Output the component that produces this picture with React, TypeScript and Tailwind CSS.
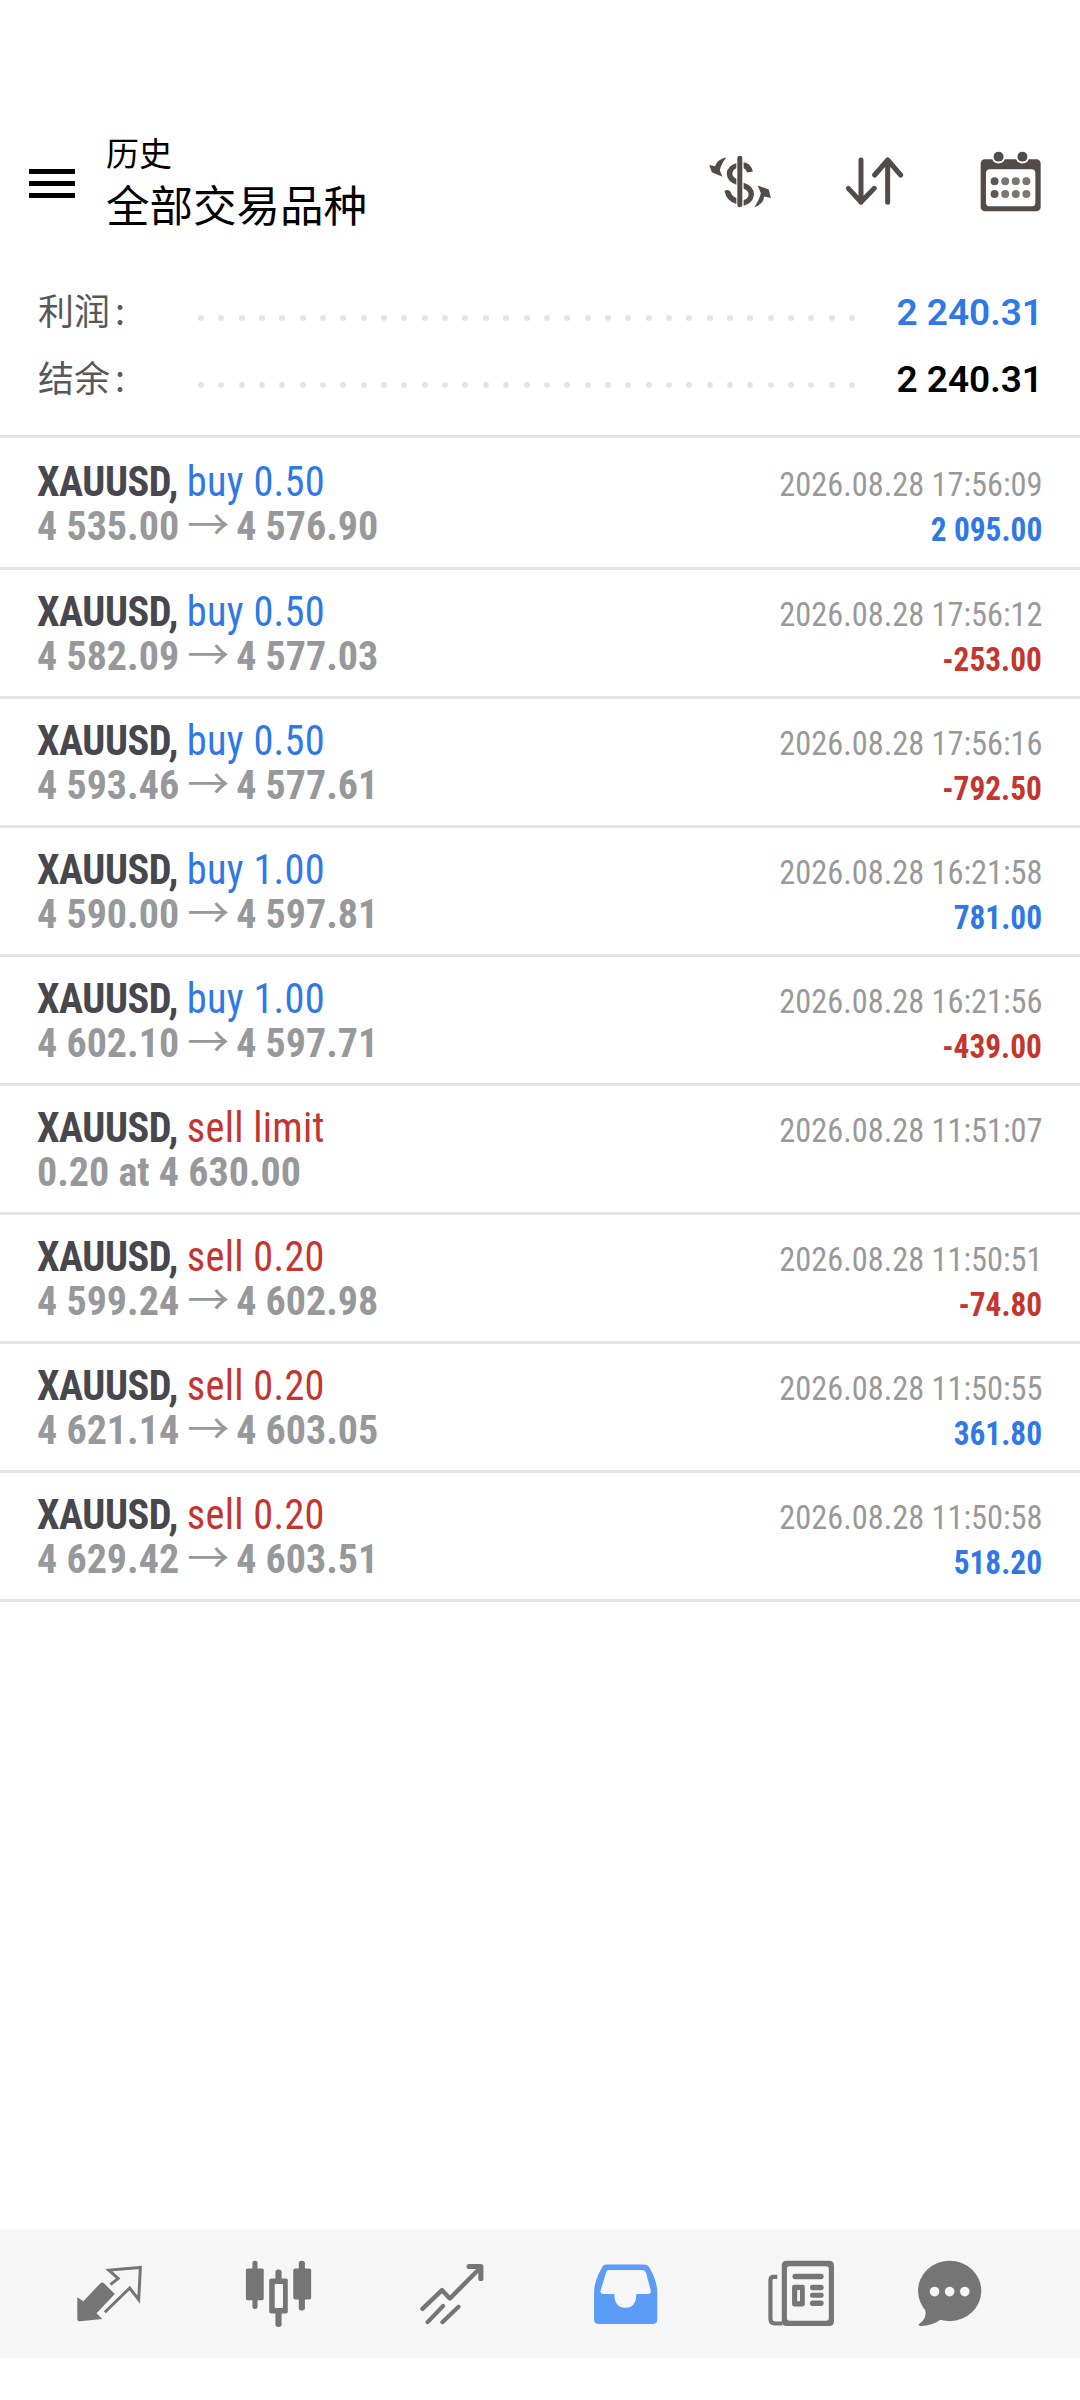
const sans = "font-['Roboto',sans-serif]";

interface Deal {
  side: string;
  sell?: boolean;
  prices: string;
  time: string;
  profit?: string;
}

const deals: Deal[] = [
  { side: 'buy 0.50', prices: '4 535.00 → 4 576.90', time: '2026.08.28 17:56:09', profit: '2 095.00' },
  { side: 'buy 0.50', prices: '4 582.09 → 4 577.03', time: '2026.08.28 17:56:12', profit: '-253.00' },
  { side: 'buy 0.50', prices: '4 593.46 → 4 577.61', time: '2026.08.28 17:56:16', profit: '-792.50' },
  { side: 'buy 1.00', prices: '4 590.00 → 4 597.81', time: '2026.08.28 16:21:58', profit: '781.00' },
  { side: 'buy 1.00', prices: '4 602.10 → 4 597.71', time: '2026.08.28 16:21:56', profit: '-439.00' },
  { side: 'sell limit', sell: true, prices: '0.20 at 4 630.00', time: '2026.08.28 11:51:07' },
  { side: 'sell 0.20', sell: true, prices: '4 599.24 → 4 602.98', time: '2026.08.28 11:50:51', profit: '-74.80' },
  { side: 'sell 0.20', sell: true, prices: '4 621.14 → 4 603.05', time: '2026.08.28 11:50:55', profit: '361.80' },
  { side: 'sell 0.20', sell: true, prices: '4 629.42 → 4 603.51', time: '2026.08.28 11:50:58', profit: '518.20' },
];

function MoneyIcon() {
  return (
    <svg viewBox="20 20 195 160" className="h-[53px] w-[65px]" fill="#524b48">
      <rect x="111" y="22" width="15" height="156" rx="7" />
      <path d="M108 44Q78 54 79 78Q81 100 108 110V92Q96 86 96 76Q96 66 108 60Z" />
      <path d="M130 42Q152 45 158 70L141 73Q137 62 130 60Z" />
      <path d="M130 104Q162 114 161 140Q158 166 130 173V156Q144 152 145 140Q145 128 130 122Z" />
      <path d="M72 128Q84 122 90 130Q95 145 108 150V168Q78 160 72 128Z" />
      <path d="M78 27Q48 35 44 54L26 50L34 72L66 86L58 66Q62 48 78 27Z" />
      <path d="M162 178Q190 168 192 145L212 150L206 124L172 112L182 135Q178 155 162 178Z" />
    </svg>
  );
}

function SortIcon() {
  return (
    <svg viewBox="555 115 180 150" className="h-[50px] w-[60px]" fill="none" stroke="#524b48" strokeWidth="15" strokeLinecap="round" strokeLinejoin="round">
      <path d="M606 127V254M568 212L606 253L646 212" />
      <path d="M686 254V127M647 172L686 127L725 172" />
    </svg>
  );
}

function CalendarIcon() {
  return (
    <svg viewBox="955 92 190 190" className="h-[63px] w-[63px]">
      <rect x="960" y="120" width="181" height="157" rx="13" fill="#524b48" />
      <rect x="976" y="150" width="149" height="112" rx="12" fill="#fff" />
      <circle cx="1014" cy="112" r="21" fill="#fff" />
      <circle cx="1086" cy="112" r="21" fill="#fff" />
      <circle cx="1014" cy="112" r="15" fill="#524b48" />
      <circle cx="1086" cy="112" r="15" fill="#524b48" />
      {[1002, 1034, 1066, 1098].map((x) => (
        <g key={x} fill={x === 1002 ? '#5f5855' : '#7d7673'}>
          <circle cx={x} cy="186" r="12" />
          <circle cx={x} cy="225" r="12" />
        </g>
      ))}
    </svg>
  );
}

function TradeIcon() {
  return (
    <svg viewBox="40 40 205 180" className="h-[60px] w-[68px]">
      <path d="M47 140L65 152L116 98Q122 92 128 98L160 130L105 188L122 205L55 212Q47 212 47 205Z" fill="#757575" />
      <path d="M147 102L170 83L142 58L237 50L232 147L205 112L130 185" fill="none" stroke="#757575" strokeWidth="9" />
    </svg>
  );
}

function CandlesIcon() {
  return (
    <svg viewBox="710 150 206 198" className="h-[68px] w-[71px]" fill="#757575">
      <rect x="737" y="152" width="15" height="141" rx="7" />
      <rect x="718" y="175" width="52" height="92" rx="5" />
      <rect x="804" y="178" width="18" height="167" rx="8" />
      <rect x="786" y="204" width="54" height="102" rx="5" />
      <rect x="802" y="220" width="24" height="70" rx="3" fill="#f6f6f6" />
      <rect x="872" y="152" width="18" height="145" rx="8" />
      <rect x="856" y="175" width="52" height="90" rx="5" />
    </svg>
  );
}

function SignalsIcon() {
  return (
    <svg viewBox="1220 155 195 180" className="h-[62px] w-[67px]" fill="none" stroke="#757575" strokeLinecap="round" strokeLinejoin="round">
      <path d="M1230 288L1287 234L1310 258L1392 175" strokeWidth="13" />
      <path d="M1366 165H1400V200" strokeWidth="15" />
      <path d="M1245 327L1290 280M1288 327L1335 282" strokeWidth="12" />
    </svg>
  );
}

function InboxIcon() {
  return (
    <svg viewBox="155 155 195 180" className="h-[62px] w-[67px]">
      <path
        fillRule="evenodd"
        fill="#5b9cf8"
        d="M196 159H306Q317 159 322 168Q345 208 345 240V320Q345 332 333 332H173Q161 332 161 320V240Q161 208 184 168Q188 159 196 159ZM205 175Q197 175 195 185L180 235Q178 245 188 245H220Q220 285 252 285Q284 285 284 245H318Q327 245 326 235L313 185Q310 175 300 175Z"
      />
    </svg>
  );
}

function NewsIcon() {
  return (
    <svg viewBox="660 148 198 195" className="h-[67px] w-[68px]" fill="#757575">
      <path
        fillRule="evenodd"
        d="M717 150H841Q855 150 855 164V326Q855 340 841 340H717Q703 340 703 326V164Q703 150 717 150ZM726 166Q718 166 718 174V317Q718 325 726 325H832Q840 325 840 317V174Q840 166 832 166Z"
      />
      <path d="M690 197H680Q670 197 670 207V320Q670 333 683 333H705" fill="none" stroke="#757575" strokeWidth="12" />
      <rect x="734" y="188" width="91" height="16" rx="8" />
      <path fillRule="evenodd" d="M739 220H764Q770 220 770 226V277Q770 283 764 283H739Q733 283 733 277V226Q733 220 739 220ZM748 235V268H756V235Z" />
      <rect x="785" y="220" width="40" height="16" rx="8" />
      <rect x="785" y="243" width="40" height="15" rx="7" />
      <rect x="785" y="266" width="40" height="16" rx="8" />
    </svg>
  );
}

function ChatIcon() {
  return (
    <svg viewBox="1098 148 192 195" className="h-[67px] w-[66px]" fill="#757575">
      <ellipse cx="1193" cy="238" rx="92" ry="88" />
      <path d="M1122 290Q1128 320 1103 335Q1101 340 1110 340Q1142 340 1170 320Z" />
      <circle cx="1149" cy="240" r="14" fill="#f6f6f6" />
      <circle cx="1193" cy="240" r="14" fill="#f6f6f6" />
      <circle cx="1237" cy="240" r="14" fill="#f6f6f6" />
    </svg>
  );
}

function SummaryLine({ label, value, blue }: { label: string; value: string; blue?: boolean }) {
  return (
    <div className="flex h-[67px] items-center">
      <span className="w-[160px] -translate-y-[4px] font-['Noto_Sans_CJK_SC',sans-serif] text-[36px] leading-none text-[#58585c]">
        {label}
        <span className="ml-[5px]">:</span>
      </span>
      <div className="flex w-[657px] translate-y-[5px] justify-between">
        {Array.from({ length: 33 }, (_, i) => (
          <span key={i} className="h-[6px] w-[6px] rounded-full bg-[#e4e4e4]" />
        ))}
      </div>
      <span className={`ml-auto translate-x-[1px] font-['Roboto',sans-serif] text-[37px] font-semibold leading-none ${blue ? 'text-[#2f78e6]' : 'text-black'}`}>
        {value}
      </span>
    </div>
  );
}

function Prices({ text }: { text: string }) {
  const parts = text.split(' → ');
  if (parts.length < 2) return <>{text}</>;
  return (
    <>
      {parts[0]}
      <span className="ml-[8px] mr-[7px] font-['Noto_Sans_CJK_SC',sans-serif] text-[42px] font-normal leading-[0]">→</span>
      {parts[1]}
    </>
  );
}

function DealRow({ deal, first }: { deal: Deal; first: boolean }) {
  return (
    <div className={`flex justify-between border-b-[3px] border-[#e5e5e5] pl-[37px] pr-[38px] ${first ? 'h-[132px] pt-[21px]' : 'h-[129px] pt-[19px]'}`}>
      <div className="font-stretch-[75%] text-[42px] leading-[45px]">
        <div className="origin-left scale-x-[0.96] whitespace-nowrap">
          <span className="font-bold tracking-[-0.5px] text-[#47474d]">XAUUSD, </span>
          <span className={`tracking-[0.3px] ${deal.sell ? 'text-[#c5352f]' : 'text-[#2f78e6]'}`}>{deal.side}</span>
        </div>
        <div className="whitespace-nowrap text-[40px] font-bold text-[#96989b]">
          <Prices text={deal.prices} />
        </div>
      </div>
      <div className="flex flex-col items-end pt-[3px] font-stretch-[75%] text-[33px] leading-[45px]">
        <div className="origin-right scale-x-[0.98] whitespace-nowrap text-[#999999]">{deal.time}</div>
        {deal.profit && (
          <div className={`origin-right scale-x-[0.95] whitespace-nowrap font-bold ${deal.profit.startsWith('-') ? 'text-[#c5352f]' : 'text-[#2f78e6]'}`}>
            {deal.profit}
          </div>
        )}
      </div>
    </div>
  );
}

export default function App() {
  return (
    <div className={`flex h-[2400px] w-[1080px] flex-col bg-white ${sans}`}>
      <header className="flex items-center pl-[29px] pr-[38px] pt-[132px]">
        <div className="mt-[5px] flex w-[77px] flex-col gap-[7px]">
          <span className="h-[5px] w-[46px] bg-black" />
          <span className="h-[5px] w-[46px] bg-black" />
          <span className="h-[5px] w-[46px] bg-black" />
        </div>
        <div className="font-['Noto_Sans_CJK_SC',sans-serif] text-black">
          <div className="text-[33px] leading-[40px]">历史</div>
          <div className="translate-y-[3px] text-[43.5px] leading-[58px]">全部交易品种</div>
        </div>
        <div className="ml-auto flex items-center gap-[72px]">
          <div className="-translate-x-[3px]"><MoneyIcon /></div>
          <div className="-translate-x-[3px]"><SortIcon /></div>
          <CalendarIcon />
        </div>
      </header>

      <section className="mt-[49px] px-[38px] pb-[22px]">
        <SummaryLine label="利润" value="2 240.31" blue />
        <SummaryLine label="结余" value="2 240.31" />
      </section>

      <div className="border-t-[3px] border-[#e5e5e5]">
        {deals.map((deal, i) => (
          <DealRow key={i} deal={deal} first={i === 0} />
        ))}
      </div>

      <nav className="mt-auto mb-[42px] flex h-[129px] items-center bg-[#f6f6f6] pl-[75px]">
        <TradeIcon />
        <div className="ml-[100px]"><CandlesIcon /></div>
        <div className="ml-[105px]"><SignalsIcon /></div>
        <div className="ml-[106px]"><InboxIcon /></div>
        <div className="ml-[108px]"><NewsIcon /></div>
        <div className="ml-[82px]"><ChatIcon /></div>
      </nav>
    </div>
  );
}
